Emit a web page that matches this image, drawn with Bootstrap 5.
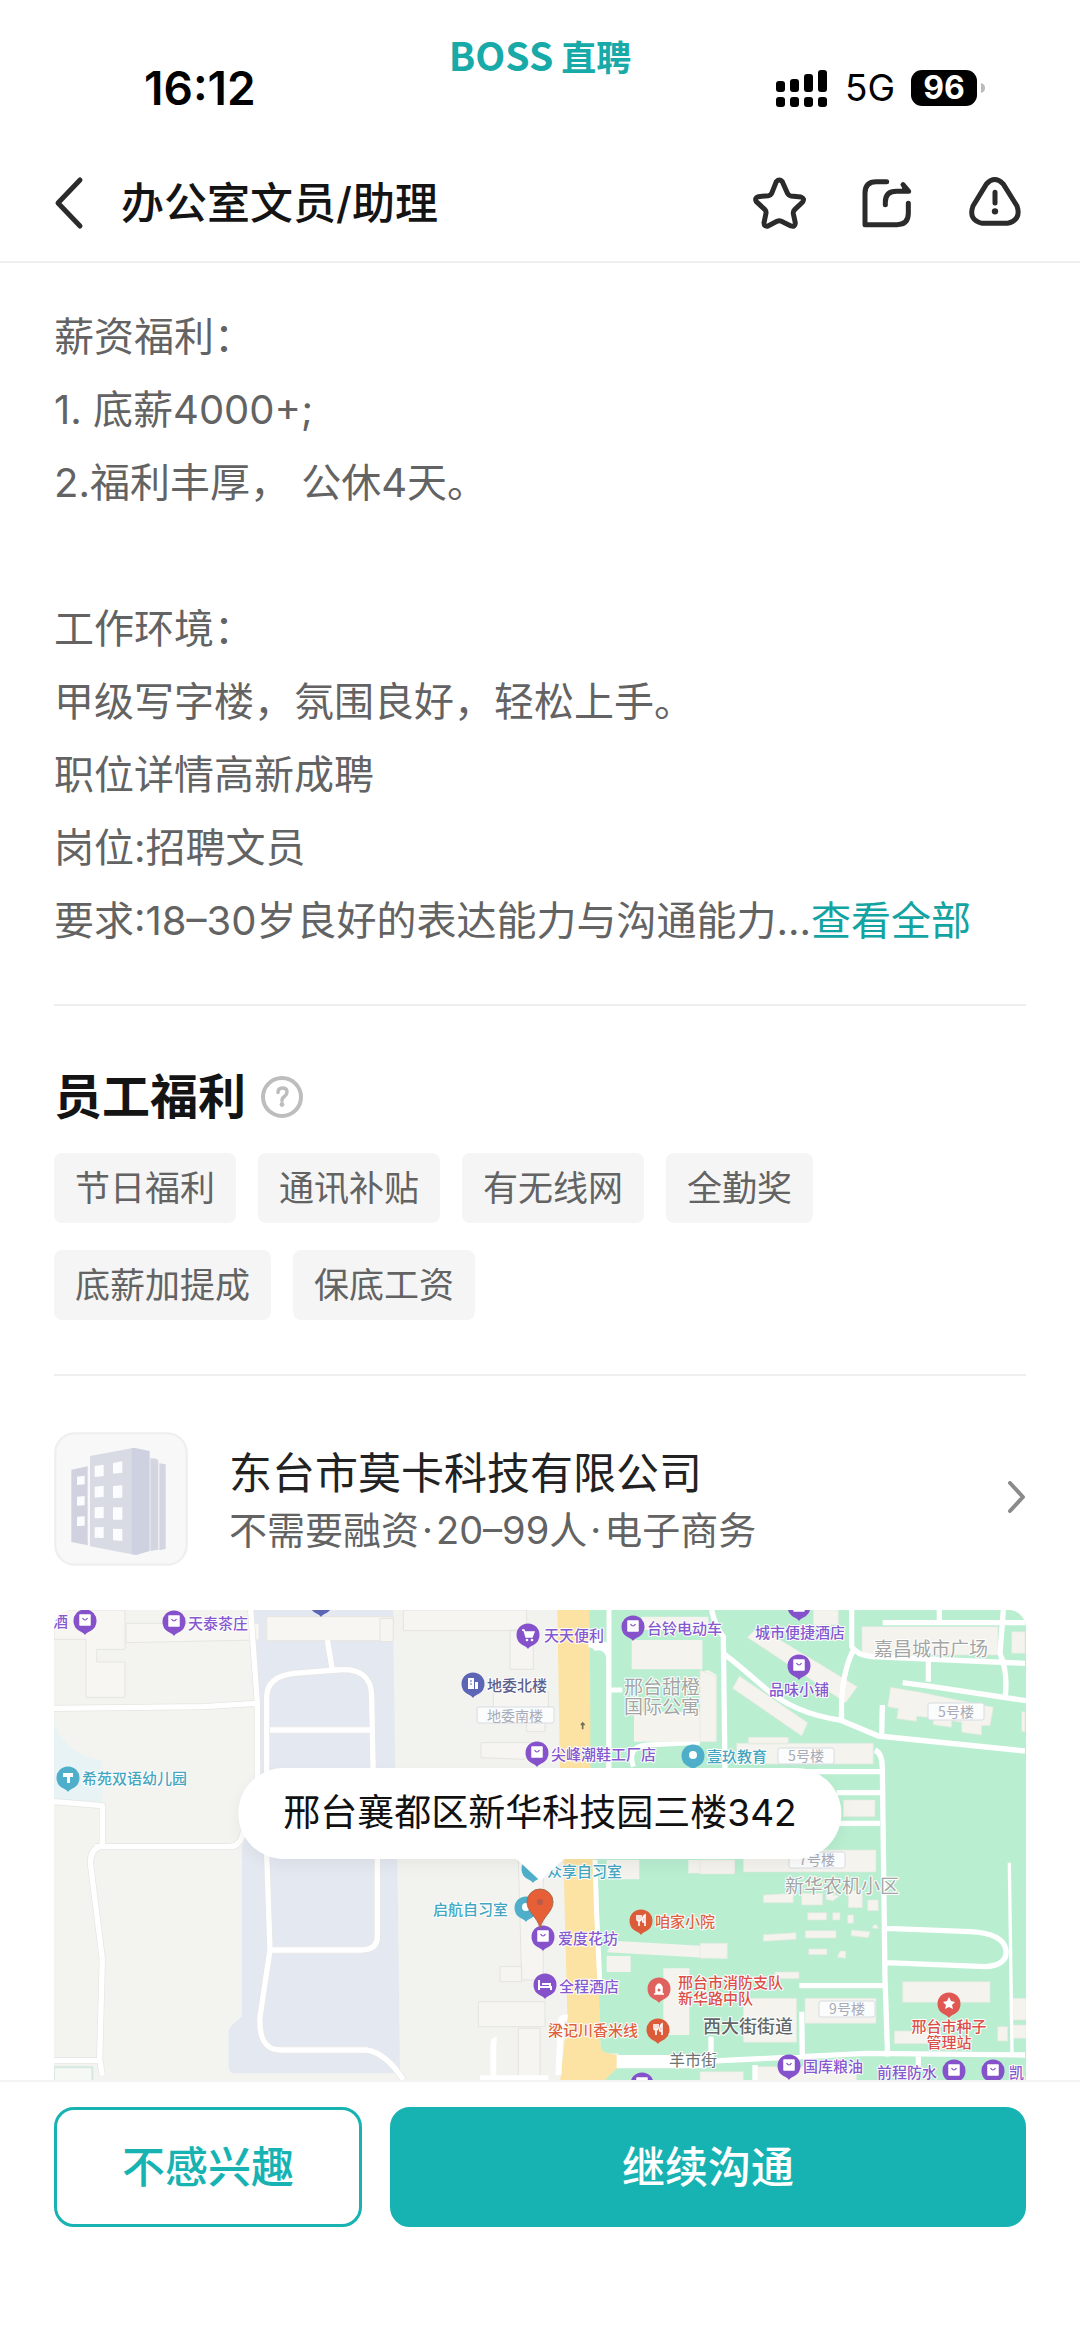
<!DOCTYPE html>
<html lang="zh-CN">
<head>
<meta charset="utf-8">
<meta name="viewport" content="width=device-width, initial-scale=1">
<title>办公室文员/助理</title>
<link href="https://cdn.jsdelivr.net/npm/bootstrap@5.3.0/dist/css/bootstrap.min.css" rel="stylesheet">
<style>
:root { --teal: #16b3b2; --ink: #141414; --grey: #636363; --line: #efefef; --edge: 54px; }
body { font-family: Inter, "Noto Sans CJK SC", sans-serif; color: var(--ink); background: #fff; }
a { text-decoration: none; }
.edge { padding-left: var(--edge); padding-right: var(--edge); }
.status { height: 144px; }
.side { flex: 1 0 0; }
.clock { padding: 60px 0 0 90px; font-size: 46px; line-height: 56px; font-weight: 600; color: #000; }
.brand { padding-top: 30px; font-family: "Noto Sans CJK SC", sans-serif; font-weight: 700; color: #17aaa8; line-height: 48px; font-size: 39px; }
.brand span { font-size: 35px; }
.signals { padding: 60px 40px 0 0; height: 116px; color: #000; }
.net { font-size: 37px; line-height: 56px; }
.batt { width: 66px; height: 36px; border-radius: 11px; background: #000; color: #fff; font-size: 32px; line-height: 36px; font-weight: 700; text-align: center; }
.topbar { height: 119px; border-bottom: 2px solid var(--line); }
.topbar h1 { font-size: 43px; line-height: 60px; font-weight: 500; }
.tools { gap: 50px; padding-right: 2px; }
.icon-btn { border: 0; padding: 0; background: none; line-height: 0; }
.desc { font-size: 40px; line-height: 73px; color: var(--grey); padding-top: 37px; padding-bottom: 47px; }
.desc p { margin: 0; min-height: 73px; }
.desc a { color: #12a3a2; }
.rule { border-top: 2px solid var(--line); margin: 0 var(--edge); }
.perks { padding-top: 59px; padding-bottom: 54px; }
.perks h2 { font-size: 48px; line-height: 64px; font-weight: 700; margin: 0 14px 0 0; }
.chips { gap: 27px 22px; padding: 0 120px 0 0; }
.chip { padding: 0 21px; height: 70px; line-height: 70px; font-size: 35px; color: var(--grey); background: #f5f5f5; border-radius: 8px; }
.company { padding-top: 56px; padding-bottom: 44px; color: #222; gap: 41px; }
.company-info { padding-top: 4px; }
.company-name { font-size: 43px; line-height: 58px; color: #222; }
.company-sub { font-size: 38px; line-height: 56px; color: var(--grey); }
.company-sub i { font-style: normal; margin: 0 3px; }
.map-box { border-radius: 18px 18px 0 0; overflow: hidden; }
.map-box svg.map { width: 100%; height: auto; display: block; }
.address { left: 50%; top: 158px; transform: translateX(-50%); height: 91px; padding: 0 45px; line-height: 90px; font-size: 37px; border-radius: 46px; background: #fff; white-space: nowrap; color: #111; box-shadow: 0 6px 16px rgba(0,0,0,.05); }
.address::after { content: ""; position: absolute; left: 50%; top: 90px; margin-left: -25px; border: 25px solid transparent; border-top: 23px solid #fff; border-bottom: 0; }
.actions { border-top: 2px solid #f3f3f3; padding-top: 25px; padding-bottom: 121px; gap: 28px; }
.actions .btn { height: 120px; border-radius: 20px; font-size: 43px; font-weight: 500; border: 3px solid var(--teal); }
.actions .btn-skip { flex: 0 0 308px; color: var(--teal); background: #fff; }
.actions .btn-chat { background: var(--teal); color: #fff; }
.map text { font-family: "Noto Sans CJK SC", sans-serif; font-size: 15px; font-weight: 500; paint-order: stroke; stroke: #fff; stroke-width: 2px; stroke-linejoin: round; }
.map .t-violet { fill: #8659cf; } .map .t-teal { fill: #45a6c0; } .map .t-orange { fill: #dd6340; } .map .t-red { fill: #dc4f49; }
.map .t-indigo { fill: #5c5f8e; }
.map .t-area { fill: #a3a5a4; font-size: 19px; font-weight: 400; }
.map .t-street { fill: #5f6767; font-size: 18px; } .map .t-lane { fill: #6d7372; font-size: 16px; font-weight: 400; }
.map .t-block { fill: #a9abb8; font-size: 14px; font-weight: 400; stroke: none; }
</style>
<script src="https://cdn.jsdelivr.net/npm/bootstrap@5.3.0/dist/js/bootstrap.bundle.min.js"></script>
</head>
<body>
<header>
  <div class="status edge d-flex">
    <div class="side"><div class="clock">16:12</div></div>
    <div class="brand">BOSS<span class="ms-2">直聘</span></div>
    <div class="side"><div class="signals d-flex justify-content-end align-items-center">
      <svg width="54" height="38" viewBox="0 0 54 38" class="me-3" aria-hidden="true"><g fill="#000"><rect x="1" y="12" width="9" height="11" rx="3"/><rect x="15" y="10" width="9" height="13" rx="3"/><rect x="29" y="5" width="9" height="18" rx="3"/><rect x="43" y="1" width="9" height="22" rx="3"/><rect x="1" y="28" width="9" height="10" rx="3"/><rect x="15" y="28" width="9" height="10" rx="3"/><rect x="29" y="28" width="9" height="10" rx="3"/><rect x="43" y="28" width="9" height="10" rx="3"/></g></svg>
      <span class="net me-3">5G</span>
      <span class="batt">96</span>
      <svg width="9" height="36" viewBox="0 0 9 36" aria-hidden="true"><path d="M4 13q4 1 4 5t-4 5z" fill="#bbb"/></svg>
    </div></div>
  </div>
  <nav class="topbar edge d-flex align-items-center">
    <button class="icon-btn me-4" aria-label="返回"><svg width="43" height="58" viewBox="0 0 43 58"><path d="M26 6 4 29 26 52" fill="none" stroke="#2b2b2b" stroke-width="5" stroke-linecap="round" stroke-linejoin="round"/></svg></button>
    <h1 class="m-0 me-auto">办公室文员/助理</h1>
    <div class="tools d-flex">
      <button class="icon-btn" aria-label="收藏"><svg width="58" height="58" viewBox="60 402 174 174" fill="none" stroke="#2b2b2b" stroke-width="15" stroke-linejoin="round"><path d="M139 425q9-10 18 0l16 36q3 6 10 7l30 3q12 4 5 15l-24 23q-5 5-4 12l6 28q-1 13-13 9l-29-14q-6-3-13 0l-27 14q-12 3-12-10l6-28q1-7-4-12l-25-23q-6-12 6-15l30-3q7-1 10-7z"/></svg></button>
      <button class="icon-btn" aria-label="分享"><svg width="58" height="58" viewBox="384 402 174 174" fill="none" stroke="#2b2b2b" stroke-width="15" stroke-linecap="round" stroke-linejoin="round"><path d="M470 425h-31q-34 0-34 34v95h96q34 0 34-34v-30M466 494v-8q0-32 34-32h36l-17-20"/><path d="M520 436v15h16z" fill="#2b2b2b" stroke-width="8"/></svg></button>
      <button class="icon-btn" aria-label="举报"><svg width="58" height="58" viewBox="708 402 174 174" fill="none" stroke="#2b2b2b" stroke-width="15" stroke-linecap="round" stroke-linejoin="round"><path d="M770 431q24-25 49 0l42 67q14 42-29 52h-75q-43-10-28-52z"/><path d="M795 457v32"/><circle cx="795" cy="514" r="9.500" fill="#2b2b2b" stroke="none"/></svg></button>
    </div>
  </nav>
</header>
<main>
  <section class="desc edge text-nowrap">
    <p>薪资福利：</p>
    <p>1. 底薪4000+;</p>
    <p>2.福利丰厚， 公休4天。</p>
    <p></p>
    <p>工作环境：</p>
    <p>甲级写字楼，氛围良好，轻松上手。</p>
    <p>职位详情高新成聘</p>
    <p>岗位:招聘文员</p>
    <p>要求:18–30岁良好的表达能力与沟通能力...<a href="#">查看全部</a></p>
  </section>
  <div class="rule"></div>
  <section class="perks edge">
    <div class="d-flex align-items-center mb-4">
      <h2>员工福利</h2>
      <button class="icon-btn" aria-label="福利说明"><svg width="44" height="44" viewBox="0 0 44 44" fill="none" stroke="#bdbdbd"><circle cx="22" cy="22" r="19" stroke-width="4"/><path d="M18 17.500q0-4.500 4.500-4.500t4.500 4q0 2.500-2.500 4.500-2.500 1.500-2.500 4" stroke-width="3.500" stroke-linecap="round"/><circle cx="22" cy="29.500" r="2.400" fill="#bdbdbd" stroke="none"/></svg></button>
    </div>
    <div class="chips d-flex flex-wrap">
      <span class="chip">节日福利</span><span class="chip">通讯补贴</span><span class="chip">有无线网</span><span class="chip">全勤奖</span><span class="chip">底薪加提成</span><span class="chip">保底工资</span>
    </div>
  </section>
  <div class="rule"></div>
  <a href="#" class="company edge d-flex align-items-center">
    <svg width="134" height="134" viewBox="0 0 402 402" aria-hidden="true"><rect x="4" y="4" width="394" height="394" rx="58" fill="#f8f8f8" stroke="#efefef" stroke-width="7"/>
      <g transform="translate(-41 -36)"><path d="M93 149l49-10v237l-49-10z" fill="#d0d3df"/><path d="M330 115q22-2 24 8v266l-24 4zM357 130l19 3v254l-19 4z" fill="#d3d6e0"/><path d="M149 108l125-23 18 5v314l-18-1-125-24z" fill="#d8dbe4"/><path d="M274 85q4-3 14 0l40 8v300l-40 12-14-2z" fill="#ced2e0"/><g fill="#fbfcfd"><path d="M110 170l23-3v26l-23 2zM110 230l23-2v28l-23 1zM110 290l23-1v28l-23 1zM163 138l27-4v34l-27 3zM163 200l27-3v33l-27 3zM163 262l27-2v34l-27 1zM163 322l27-1v33l-27-1zM218 129l28-5v34l-28 3zM218 198l28-2v37l-28 1zM218 262h28v37h-28zM218 326l28 1v36l-28-2z"/></g></g></svg>
    <div class="company-info me-auto"><div class="company-name">东台市莫卡科技有限公司</div><div class="company-sub">不需要融资<i>·</i>20–99人<i>·</i>电子商务</div></div>
    <svg width="20" height="36" viewBox="0 0 20 36" aria-hidden="true"><path d="M4 2 17 16 4 30" fill="none" stroke="#8b8b8b" stroke-width="4" stroke-linecap="round" stroke-linejoin="round"/></svg>
  </a>
  <section class="edge">
    <div class="map-box position-relative">
      <svg class="map" viewBox="0 0 972 470" role="img" aria-label="地图">
        <defs>
          <path id="drop" d="M0 14C-2 11-4 11-7 9A11.500 11.500 0 1 1 7 9C4 11 2 11 0 14z"/>
          <g id="bag"><path d="M-5-6h10v10h-10z" fill="#fff" stroke="#fff" stroke-width="1.500" stroke-linejoin="round"/><path d="M-2.500-3q2.500 4 5 0" fill="none" stroke="#8552cc" stroke-width="1.200"/></g>
          <g id="shop"><use href="#drop" fill="#8552cc"/><use href="#bag"/></g>
          <g id="food"><use href="#drop" fill="#dc5b39"/><path d="M-4-6v4q0 2 2 2t2-2v-4M-2-6v11M4 5v-11q-3 2-2 7h2" fill="none" stroke="#fff" stroke-width="1.600"/></g>
          <g id="dot"><use href="#drop" fill="#4fafcb"/><circle cy="-1" r="4" fill="#fff"/></g>
          <path id="west-roads" d="M632 30l20 280v220q-3 100-43 170-10 40-40 40H165M42 325l450-5 160-10M42 605l145 12v120q-40 10-35 60l35 280-8 300 8 50M42 1382h140M862 120l15 90M680 540V290q2-60 80-70l130-10q105-10 105 80l5 250M690 390h305M680 760l10 290h270q52 0 52-40V760M690 1050l-30 200q-5 100 60 100h260q60 10 110 90"/>
        </defs>
        <rect width="972" height="470" fill="#f3f3ef"/>
        <!-- western blocks -->
        <g transform="translate(-14 -10) scale(.333333)">
          <path d="M640 30h740v90h-320l6 380 10 500 5 420H580q-16-4-14-30v-100q10-20 40-40V740l60-140z" fill="#e4e9f1"/>
          <path d="M1060 30h900v1420h-880l-10-900z" fill="#f2f2ef"/>
          <path d="M42 350q10 100 145 135v130l-145-10z" fill="#e7f3f5"/>
          <g fill="#f7f6f2" stroke="#e6e5e0" stroke-width="3"><path d="M42 30h213v118h-85v38h85v106H138V118H42zM258 70h400v50l-400 8zM680 50h380v72H680z"/></g>
          <path d="M42 1402h115v50H42z" fill="#f6f8f4" stroke="#d4e9e2" stroke-width="6"/>
          <use href="#west-roads" fill="none" stroke="#e5e5e3" stroke-width="20" stroke-linejoin="round"/>
          <use href="#west-roads" fill="none" stroke="#fff" stroke-width="16" stroke-linejoin="round"/>
        </g>
        <!-- avenue and central blocks -->
        <g transform="translate(326 -10) scale(.333333)">
          <g fill="#f6f5f2" stroke="#e3e3df" stroke-width="3"><path d="M0 55h40v70H0zM70 30h370v62H70zM390 90h70v118h-70zM340 275h165v65H340zM440 340h55v55h-55zM303 428h190l-60 50-130-5zM415 780h75v360h-65zM360 1100h65v45h-65zM295 1205h200v75H295zM415 1285h65v155h-65z"/></g>
          <path d="M532 30h98l5 480 12 400 15 430q20 25 55 25v80H540l22-190-12-500-10-245z" fill="#fce3a3"/>
          <path d="M628 30h1320v1420H665l50-50v-40q-50 5-53-20l-15-430-12-400z" fill="#b9eed1"/>
          <path d="M625 120h30q32 0 32 30V30v480l-32-5q-5-10-5-30V180q0-38-25-38z" fill="#fff"/>
          <path d="M655 175v320" stroke="#b9eed1" stroke-width="48" stroke-linecap="round"/>
          <path d="M687 30v480M687 270h40M645 780l5 160 10 220M760 500q-20-60 40-65l160-8" fill="none" stroke="#fff" stroke-width="15"/>
          <g fill="#f4f3ee"><path d="M755 120h212v88H755zM965 215l20-5 25 15v200H762v-90h205zM785 50h200v40H785zM680 780h98v58h-98zM680 1068h72v48h-72zM700 1022l340 20v35l-360-20zM850 1105h78v200h-78zM925 780h140v40H925z"/></g>
          <path d="M340 1440v-105q0-15 10-15M535 1425l8-160q0-15 20-12M300 1435h205" fill="none" stroke="#fff" stroke-width="18"/>
          <path d="M715 1370h260v30H715zM992 1310v70" fill="#fff" stroke="#fff" stroke-width="10"/>
          <path d="M608 388v-18m-5 5 5-6 6 6" stroke="#756f56" stroke-width="5" fill="none"/>
        </g>
        <!-- eastern blocks -->
        <g transform="translate(646 -10) scale(.333333)">
          <g fill="#f4f3ee" stroke="#e2e9df" stroke-width="2"><path d="M175 80l297 180-35 48L142 112zM118 228l205 140-18 40L98 265zM0 210l48 20v195H0zM110 430h410v62H110zM145 412h120v20H145zM486 80h408v85H486zM935 95h40v65h-40zM340 30h75v45h-75zM572 262l90 15 218 45-10 55h-25v28l-60-8v-30l-30-5v20l-55-8v-20l-50-5v15l-60-8 5-30-32-6zM430 600h95v50h-95zM130 750h398v66H130zM0 780h103v42H0zM965 335h10v60h-10zM190 885l90-5v28h-90zM305 880h63v35h-63zM380 878l38 10-20 15-20-5zM445 870l42 5v48h-42zM503 900h32v32h-32zM323 938h57v22h-57zM398 938h22v22h-22zM443 945h18v25h-18zM455 990l55 5-5 18-52-6zM518 978l10-5 8 12h-18zM190 1004l98-6v20l-98 6zM316 992h92v22h-92zM326 1047h55v17h-55zM420 1053h17v22l-25-3zM0 1030h82v45H0zM225 1116h72v20h-72zM130 1195h160v132H130zM315 1195h213v75H315zM608 1145h262v62H608zM583 1293h140v38H583zM893 1280h30v43h-30zM938 1195h40v65h-40zM938 1275h40v40h-40zM0 1415h130v30H0zM170 1400h300v45H170z"/></g>
          <g fill="none" stroke="#fff" stroke-width="16" stroke-linejoin="round"><path d="M35 30q10 50 35 80l5 400M70 160q40 30 120 100 90 80 230 100l115 48 440 45M455 30v110q15 25 60 30l460 20M460 150q-40 80-35 210M545 410l2-95M548 68h427M718 30v30M685 180v65M608 248l90 12 280 42M910 30l-10 130q25 60 15 135M525 450q22 10 22 55l8 630 8 235M540 515H110M540 578H410M540 670H410M560 985l250 10q100 5 108 55 5 45-60 50l-300-12M550 1157H298M0 1385l500-25 475 5M305 1235l2 135M33 1310v70M165 1395v50M655 1370v40"/><path d="M928 788l8 570" stroke-width="10"/></g>
        </g>
        <g fill="#fbfcfc" stroke="#d8dce2"><rect x="423" y="97" width="77" height="16" rx="2"/><rect x="874" y="93" width="56" height="17" rx="2"/><rect x="724" y="138" width="56" height="16" rx="2"/><rect x="735" y="242" width="56" height="16" rx="2"/><rect x="765" y="391" width="56" height="16" rx="2"/></g>
        <g text-anchor="middle">
          <text class="t-block" x="461" y="111">地委南楼</text><text class="t-block" x="902" y="107">5号楼</text><text class="t-block" x="752" y="151">5号楼</text><text class="t-block" x="763" y="255">7号楼</text><text class="t-block" x="793" y="404">9号楼</text>
          <text class="t-area" x="608" y="84">邢台甜橙</text><text class="t-area" x="608" y="104">国际公寓</text><text class="t-area" x="877" y="46">嘉昌城市广场</text><text class="t-area" x="788" y="283">新华农机小区</text>
          <text class="t-street" x="694" y="423">西大街街道</text><text class="t-lane" x="639" y="456">羊市街</text>
          <text class="t-violet" x="746" y="28">城市便捷酒店</text><text class="t-violet" x="745" y="85">品味小铺</text>
          <text class="t-red" x="895" y="422">邢台市种子</text><text class="t-red" x="895" y="438">管理站</text>
        </g>
        <g class="t-violet"><text x="-1" y="17">酒</text><text x="134" y="19">天泰茶庄</text><text x="490" y="31">天天便利</text><text x="593" y="24">台铃电动车</text><text x="497" y="150">尖峰潮鞋工厂店</text><text x="504" y="334">爱度花坊</text><text x="505" y="382">全程酒店</text><text x="749" y="462">国库粮油</text><text x="823" y="468">前程防水</text><text x="955" y="468">凯</text></g>
        <g class="t-teal"><text x="28" y="174">希苑双语幼儿园</text><text x="653" y="152">壹玖教育</text><text x="493" y="267">众享自习室</text><text x="379" y="305">启航自习室</text></g>
        <text class="t-indigo" x="433" y="81">地委北楼</text>
        <g class="t-orange"><text x="601" y="317">咱家小院</text><text x="494" y="426">梁记川香米线</text></g>
        <g class="t-red"><text x="624" y="378">邢台市消防支队</text><text x="624" y="394">新华路中队</text></g>
        <use href="#shop" x="31" y="11"/><use href="#shop" x="120" y="12"/><use href="#shop" x="579" y="17"/><use href="#shop" x="483" y="143"/><use href="#shop" x="745" y="-3"/><use href="#shop" x="745" y="56"/><use href="#shop" x="489" y="327"/><use href="#shop" x="735" y="456"/><use href="#shop" x="900" y="461"/><use href="#shop" x="939" y="461"/><use href="#shop" x="588" y="474"/>
        <use href="#drop" x="267" y="-7" fill="#5d65b5"/>
        <g transform="translate(474 25)"><use href="#drop" fill="#8552cc"/><path d="M-6-5h2l2 7h6l2-5h-9" fill="#fff" stroke="#fff" stroke-width="1.500"/><circle cx="-1" cy="5" r="1.300" fill="#fff"/><circle cx="4" cy="5" r="1.300" fill="#fff"/></g>
        <g transform="translate(419 74)"><use href="#drop" fill="#5d65b5"/><path d="M-5 5v-11h6v11zM2 5v-7h3v7z" fill="#fff"/><path d="M-3-3h2m-2 3h2" stroke="#5d65b5"/></g>
        <g transform="translate(491 375)"><use href="#drop" fill="#8552cc"/><path d="M-6-5v10M-6 2h12v3M-3-1h8v3" fill="none" stroke="#fff" stroke-width="2"/></g>
        <g transform="translate(14 168)"><use href="#drop" fill="#4fafcb"/><path d="M-5-5h10v4h-10zM-1-1h3v6h-3z" fill="#fff"/></g>
        <use href="#dot" x="639" y="146"/><use href="#dot" x="479" y="259"/><use href="#dot" x="472" y="298"/>
        <use href="#food" x="587" y="311"/><use href="#food" x="604" y="420"/>
        <g transform="translate(605 379)"><use href="#drop" fill="#e0625e"/><path d="M-5 5h10M-3 4v-6q3-6 6 0v6z" fill="#fff" stroke="#fff" stroke-width="1.500"/><circle cy="1" r="1.500" fill="#e0625e"/></g>
        <g transform="translate(895 394)"><use href="#drop" fill="#e05753"/><path d="M0-7l2 4 4 1-3 3 1 4-4-2-4 2 1-4-3-3 4-1z" fill="#fff"/></g>
        <path d="M486 318C483 306 473 302 473 292a13 13 0 0 1 26 0C499 302 489 306 486 318z" fill="#e65f37" stroke="#a5684d" stroke-width="1"/><circle cx="486" cy="292" r="3" fill="#b95b48"/>
      </svg>
      <div class="address position-absolute">邢台襄都区新华科技园三楼342</div>
    </div>
  </section>
</main>
<footer class="actions edge d-flex">
  <button class="btn btn-skip">不感兴趣</button>
  <button class="btn btn-chat flex-grow-1">继续沟通</button>
</footer>
</body>
</html>
